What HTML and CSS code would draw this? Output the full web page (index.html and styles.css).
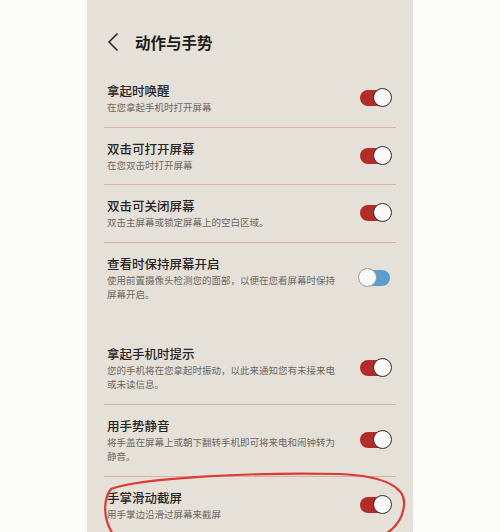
FILE: index.html
```html
<!DOCTYPE html>
<html lang="zh-CN">
<head>
<meta charset="UTF-8">
<meta name="viewport" content="width=device-width, initial-scale=1.0">
<title>动作与手势</title>
<link rel="stylesheet" href="styles.css">
</head>
<body>
<div class="screen">
 <header class="topbar">
  <svg class="back" width="10" height="18" viewBox="0 0 10 18"><polyline points="9,1 1,9 9,17" fill="none" stroke="#222" stroke-width="1.6" stroke-linecap="round" stroke-linejoin="round"/></svg>
  <h1 class="page-title">动作与手势</h1>
 </header>
 <ul class="settings">
  <li class="row">
   <div class="text"><p class="name">拿起时唤醒</p><p class="desc">在您拿起手机时打开屏幕</p></div>
   <span class="switch on"></span>
  </li>
  <li class="row">
   <div class="text"><p class="name">双击可打开屏幕</p><p class="desc">在您双击时打开屏幕</p></div>
   <span class="switch on"></span>
  </li>
  <li class="row">
   <div class="text"><p class="name">双击可关闭屏幕</p><p class="desc">双击主屏幕或锁定屏幕上的空白区域。</p></div>
   <span class="switch on"></span>
  </li>
  <li class="row section-end">
   <div class="text"><p class="name">查看时保持屏幕开启</p><p class="desc">使用前置摄像头检测您的面部，以便在您看屏幕时保持屏幕开启。</p></div>
   <span class="switch off"></span>
  </li>
  <li class="row">
   <div class="text"><p class="name">拿起手机时提示</p><p class="desc">您的手机将在您拿起时振动，以此来通知您有未接来电或未读信息。</p></div>
   <span class="switch on"></span>
  </li>
  <li class="row">
   <div class="text"><p class="name">用手势静音</p><p class="desc">将手盖在屏幕上或朝下翻转手机即可将来电和闹钟转为静音。</p></div>
   <span class="switch on"></span>
  </li>
  <li class="row">
   <div class="text"><p class="name">手掌滑动截屏</p><p class="desc">用手掌边沿滑过屏幕来截屏</p></div>
   <span class="switch on"></span>
  </li>
 </ul>
 <svg class="scribble" viewBox="87 0 326 532" width="326" height="532"><path d="M113 534 C104 521,102 501,111 489 C140 478,250 472,340 474 C386 476,406 488,404 505 C403 518,396 528,384 535" fill="none" stroke="#df3a33" stroke-width="2.2" stroke-linecap="round"/></svg>
</div>
</body>
</html>
```

FILE: styles.css
```css
html,body{margin:0;height:100%}
body{background:#fcfcfb;font-family:"Noto Sans CJK SC","Noto Sans",sans-serif;color:#222;overflow:hidden}
.screen{position:relative;width:326px;height:532px;margin:0 auto;background:#e6e1d8;overflow:hidden}
.topbar{display:flex;align-items:center;gap:17px;padding:32px 21px 18px;height:20px}
.back{flex:none}
.page-title{margin:0;font-size:15.5px;line-height:20px;font-weight:700;color:#1d1d1d}
.settings{list-style:none;margin:0 17px;padding:0}
.row{display:flex;align-items:center;justify-content:space-between;padding:12px 4px 12px 3px;border-bottom:1px solid #d9b0a6}
.row.section-end{border-bottom:none;margin-bottom:19px}
.text{width:232px}
.name{margin:0;font-size:12.5px;line-height:18px;font-weight:500;color:#262424}
.desc{margin:0;font-size:9.5px;line-height:14.5px;color:#6d6863}
.switch{position:relative;flex:none;width:34px;height:20px}
.switch::before{content:"";position:absolute;top:2px;left:2px;width:30px;height:16px;border-radius:8px}
.switch::after{content:"";position:absolute;top:0;width:17px;height:17px;border-radius:50%;background:#fbfaf8}
.switch.on::before{background:#b42c27}
.switch.on::after{right:0;border:1.5px solid #2e2b2a}
.switch.off::before{background:#5b9ecb}
.switch.off::after{left:0;border:1.5px solid #8d9aa3}
.scribble{position:absolute;top:0;left:0;pointer-events:none}
```
